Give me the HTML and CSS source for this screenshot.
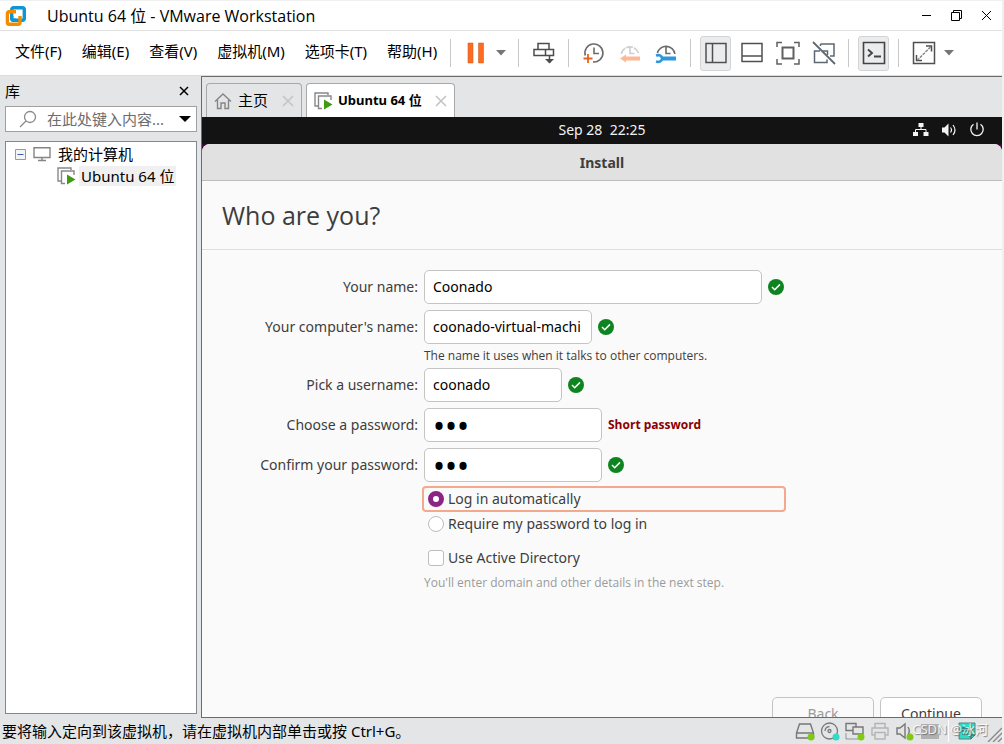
FILE: index.html
```html
<!DOCTYPE html>
<html lang="zh-CN">
    <head>
        <meta charset="utf-8">
        <title>Ubuntu 64 位 - VMware Workstation</title>
        <link rel="stylesheet" href="styles.css">
    </head>
    <body>
        <div class="app">
            <header class="titlebar">
                <svg class="logo" width="22" height="22" viewBox="0 0 22 22" fill="none" stroke-width="3.4">
                    <rect x="6.7" y="2.7" width="12.6" height="12.6" rx="2" stroke="#0e95d4"/>
                    <path d="M11 6.7H4.2a1.8 1.8 0 0 0-1.8 1.8v9a1.8 1.8 0 0 0 1.8 1.8h9a1.8 1.8 0 0 0 1.8-1.8V11" stroke="#f38b00"/>
                    <path d="M6.7 11v2.6a1.7 1.7 0 0 0 1.7 1.7H11" stroke="#0e95d4"/>
                </svg>
                <h1>Ubuntu 64 位 - VMware Workstation</h1>
                <div class="window-buttons">
                    <button aria-label="最小化"><svg width="11" height="11" viewBox="0 0 11 11"><path d="M1 5.5h9" stroke="#000"/></svg></button>
                    <button aria-label="还原"><svg width="11" height="11" viewBox="0 0 11 11" fill="none" stroke="#000"><path d="M.5 2.5h8v8h-8zM2.5 2.5v-2h8v8h-2"/></svg></button>
                    <button aria-label="关闭"><svg width="11" height="11" viewBox="0 0 11 11"><path d="M1 1l9 9M10 1l-9 9" stroke="#000"/></svg></button>
                </div>
            </header>

            <div class="toolbar">
                <nav class="menu">
                    <a href="#">文件(F)</a>
                    <a href="#">编辑(E)</a>
                    <a href="#">查看(V)</a>
                    <a href="#">虚拟机(M)</a>
                    <a href="#">选项卡(T)</a>
                    <a href="#">帮助(H)</a>
                </nav>
                <span class="sep"></span>
                <button class="tool" aria-label="挂起"><svg width="24" height="24" viewBox="0 0 24 24" fill="#ff6a1f" stroke="#c9683a" stroke-width=".6"><path d="M4 2h5v20H4zM14.500 2h5v20h-5z"/></svg></button>
                <button class="caret" aria-label="电源选项"><svg width="10" height="6" viewBox="0 0 10 6"><path d="M0 0h10L5 5.500z" fill="#767676"/></svg></button>
                <span class="sep"></span>
                <button class="tool" aria-label="发送按键"><svg width="24" height="24" viewBox="0 0 24 24" fill="none" stroke="#4c4c4c" stroke-width="1.500"><path d="M6 2.500h11v6H6zM2 8.500h19.500v6H2zM13.500 8.500v6M17.500 15v7"/><path d="M13 18h9l-4.500 4.500z" fill="#4c4c4c" stroke="none"/></svg></button>
                <span class="sep"></span>
                <button class="tool" aria-label="拍摄快照"><svg width="24" height="24" viewBox="0 0 24 24" fill="none" stroke="#6b6b6b" stroke-width="1.600"><path d="M3.300 14.500a9 9 0 1 1 7.700 6.400M12 6.500v6h5"/><path d="M6 13v9M1.500 17.500h9" stroke="#e8641f" stroke-width="1.800"/></svg></button>
                <button class="tool" aria-label="恢复快照"><svg width="24" height="24" viewBox="0 0 24 24" fill="none" stroke="#cfcfcf" stroke-width="1.600"><path d="M3.200 13a9 9 0 0 1 17.600 0" stroke-dasharray="7 1"/><path d="M12 6v6.500h4.500"/><path d="M8 17.500h14" stroke="#ffb796" stroke-width="4"/><path d="M2 17.500l6-4v8z" fill="#ffb796" stroke="none"/></svg></button>
                <button class="tool" aria-label="管理快照"><svg width="24" height="24" viewBox="0 0 24 24" fill="none" stroke="#6b6b6b" stroke-width="1.600"><path d="M3.300 12a9 9 0 0 1 17.600 1M12 6v6.500h4.500"/><path d="M8 17.500h14" stroke="#2c97dc" stroke-width="4"/><path d="M2 14.500c3.500-1 6 .5 6 3s-2.500 4-6 3" stroke="#2c97dc" stroke-width="2.600"/></svg></button>
                <span class="sep"></span>
                <button class="tool pressed" aria-label="库"><svg width="24" height="24" viewBox="0 0 24 24" fill="none" stroke="#505050" stroke-width="1.500"><path d="M2 2.500h20v19H2zM8.500 2.500v19"/></svg></button>
                <button class="tool" aria-label="缩略图栏"><svg width="24" height="24" viewBox="0 0 24 24" fill="none" stroke="#505050" stroke-width="1.500"><path d="M2 2.500h20v18H2zM2 15h20"/></svg></button>
                <button class="tool" aria-label="全屏"><svg width="24" height="24" viewBox="0 0 24 24" fill="none" stroke="#606060" stroke-width="1.500"><path d="M1 6V1.500h5M18 1.500h5V6M23 18v5h-5M6 23H1v-5"/><path d="M6.500 6.500h11v11h-11z" stroke-width="2"/></svg></button>
                <button class="tool" aria-label="Unity"><svg width="24" height="24" viewBox="0 0 24 24" fill="none" stroke="#5c6873" stroke-width="1.500"><path d="M8.500 3h13.500v12h-4M8.500 3v2M8 10H2.500v11.500H15v-3M11 10h4.500v4"/><path d="M1 1l22 22" stroke-width="1.800"/></svg></button>
                <span class="sep"></span>
                <button class="tool pressed" aria-label="控制台"><svg width="24" height="24" viewBox="0 0 24 24" fill="none" stroke="#444" stroke-width="1.600"><path d="M1.500 1.500h21v21h-21z"/><path d="M6 8.500l4 3.500-4 3.500M12 15.500h7" stroke-width="1.900"/></svg></button>
                <span class="sep"></span>
                <button class="tool" aria-label="拉伸客户机"><svg width="24" height="24" viewBox="0 0 24 24" fill="none" stroke="#505050" stroke-width="1.500"><path d="M1.500 1.500h21v21h-21zM14 5h5.500v5.500M10 19.500H4.500V14"/><path d="M18.500 6l-13 13" stroke="#888" stroke-dasharray="3 1"/></svg></button>
                <button class="caret" aria-label="拉伸选项"><svg width="10" height="6" viewBox="0 0 10 6"><path d="M0 0h10L5 5.500z" fill="#767676"/></svg></button>
            </div>

            <div class="main">
                <aside class="library">
                    <div class="library-head">
                        <h2>库</h2>
                        <button aria-label="关闭库"><svg width="10" height="10" viewBox="0 0 10 10"><path d="M1 1l8 8M9 1l-8 8" stroke="#000" stroke-width="1.500"/></svg></button>
                    </div>
                    <div class="search">
                        <svg width="18" height="18" viewBox="0 0 18 18" fill="none" stroke="#888" stroke-width="1.300"><circle cx="11" cy="7" r="5.500"/><path d="M7 11l-6 6"/></svg>
                        <input type="text" aria-label="搜索" placeholder="在此处键入内容...">
                        <button aria-label="搜索选项"><svg width="12" height="6" viewBox="0 0 12 6"><path d="M0 0h12L6 6z"/></svg></button>
                    </div>
                    <ul class="tree">
                        <li>
                            <svg width="11" height="11" viewBox="0 0 11 11"><path d="M.5.500h10v10H.5z" fill="#f4f4f4" stroke="#999"/><path d="M2.500 5.500h6" stroke="#3b5fb0"/></svg>
                            <svg width="18" height="16" viewBox="0 0 18 16" fill="none" stroke="#858585" stroke-width="1.400"><path d="M1 1.700h16v9.800H1zM9 11.500V14M5 14.500h8"/></svg>
                            <span>我的计算机</span>
                        </li>
                        <li class="child">
                            <svg width="19" height="18" viewBox="0 0 19 18" fill="none" stroke="#888" stroke-width="1.400"><path d="M4 14H1V1h13v2"/><path d="M8 16.500H4.500V4H17v4"/><path d="M10 7.500v10l8.500-5z" fill="#3f9c12" stroke="none"/></svg>
                            <span class="selected">Ubuntu 64 位</span>
                        </li>
                    </ul>
                </aside>

                <section class="console">
                    <div class="tabs">
                        <div class="tab">
                            <svg width="18" height="18" viewBox="0 0 18 18" fill="none" stroke="#858585" stroke-width="1.400"><path d="M1 9.500L9 2l8 7.500M3.500 8v8.500H7V11h4v5.500h3.500V8"/></svg>
                            <a href="#">主页</a>
                            <button aria-label="关闭主页"><svg width="12" height="12" viewBox="0 0 12 12"><path d="M1 1l10 10M11 1L1 11" stroke="#c4c4c4" stroke-width="1.600"/></svg></button>
                        </div>
                        <div class="tab active">
                            <svg width="19" height="18" viewBox="0 0 19 18" fill="none" stroke="#888" stroke-width="1.400"><path d="M4 14H1V1h13v2"/><path d="M8 16.500H4.500V4H17v4"/><path d="M10 7.500v10l8.500-5z" fill="#3f9c12" stroke="none"/></svg>
                            <a href="#">Ubuntu 64 位</a>
                            <button aria-label="关闭选项卡"><svg width="12" height="12" viewBox="0 0 12 12"><path d="M1 1l10 10M11 1L1 11" stroke="#c4c4c4" stroke-width="1.600"/></svg></button>
                        </div>
                    </div>

                    <div class="guest">
                        <div class="topbar">
                            <span class="clock">Sep 28&nbsp; 22:25</span>
                            <div class="indicators">
                                <svg width="16" height="16" viewBox="0 0 16 16" fill="#f4f4f4"><path d="M5.500 1h5v4h-5zM0 10h5v4H0zM10.500 10h5v4h-5z"/><path d="M8 5v2.500M2.500 10V7.500h10.500V10" fill="none" stroke="#f4f4f4"/></svg>
                                <svg width="16" height="16" viewBox="0 0 16 16" fill="none" stroke="#f4f4f4" stroke-width="1.200"><path d="M1 5.500h2.500l4-4v13l-4-4H1z" fill="#f4f4f4" stroke="none"/><path d="M9.500 5.500q2 2.500 0 5M12 3q4 5 0 10"/></svg>
                                <svg width="16" height="16" viewBox="0 0 16 16" fill="none" stroke="#f4f4f4" stroke-width="1.300"><path d="M4.500 2.300a6.200 6.200 0 1 0 7 0M8 .5v7"/></svg>
                            </div>
                        </div>
                        <div class="installer">
                            <div class="installer-title">Install</div>
                            <h2>Who are you?</h2>
                            <form class="form">
                                <label class="label" for="name">Your name:</label>
                                <div class="field">
                                    <input class="entry wide" id="name" type="text" value="Coonado">
                                    <svg class="ok" viewBox="0 0 16 16"><circle cx="8" cy="8" r="8"/><path d="M4 8l2.700 2.700L12 5.400"/></svg>
                                </div>

                                <label class="label" for="host">Your computer's name:</label>
                                <div class="field">
                                    <input class="entry host" id="host" type="text" value="coonado-virtual-machi">
                                    <svg class="ok" viewBox="0 0 16 16"><circle cx="8" cy="8" r="8"/><path d="M4 8l2.700 2.700L12 5.400"/></svg>
                                </div>
                                <p class="hint">The name it uses when it talks to other computers.</p>

                                <label class="label" for="user">Pick a username:</label>
                                <div class="field">
                                    <input class="entry user" id="user" type="text" value="coonado">
                                    <svg class="ok" viewBox="0 0 16 16"><circle cx="8" cy="8" r="8"/><path d="M4 8l2.700 2.700L12 5.400"/></svg>
                                </div>

                                <label class="label" for="password">Choose a password:</label>
                                <div class="field">
                                    <input class="entry password" id="password" type="password" value="123">
                                    <strong class="warning">Short password</strong>
                                </div>

                                <label class="label" for="confirm">Confirm your password:</label>
                                <div class="field">
                                    <input class="entry password" id="confirm" type="password" value="123">
                                    <svg class="ok" viewBox="0 0 16 16"><circle cx="8" cy="8" r="8"/><path d="M4 8l2.700 2.700L12 5.400"/></svg>
                                </div>

                                <div class="options">
                                    <label class="option focused"><input type="radio" name="login" checked>Log in automatically</label>
                                    <label class="option"><input type="radio" name="login">Require my password to log in</label>
                                    <label class="option directory"><input type="checkbox">Use Active Directory</label>
                                </div>
                                <p class="hint muted">You'll enter domain and other details in the next step.</p>
                            </form>
                            <div class="actions">
                                <button disabled>Back</button>
                                <button>Continue</button>
                            </div>
                        </div>
                    </div>
                </section>
            </div>

            <footer class="statusbar">
                <span>要将输入定向到该虚拟机，请在虚拟机内部单击或按 Ctrl+G。</span>
                <div class="devices">
                    <svg width="20" height="20" viewBox="0 0 20 20" fill="none" stroke="#777" stroke-width="1.400"><path d="M4.500 3h11l3 9v5H1.500v-5zM1.500 12h17"/><circle cx="16" cy="16" r="3.500" fill="#7fca14" stroke="none"/></svg>
                    <svg width="20" height="20" viewBox="0 0 20 20" fill="none" stroke="#777" stroke-width="1.300"><circle cx="9.500" cy="10" r="8"/><circle cx="9.500" cy="10" r="1.500"/><path d="M5 10a4.500 4.500 0 0 1 4.500-4.500"/><circle cx="16" cy="16" r="3.500" fill="#2fdcc8" stroke="none"/></svg>
                    <svg width="20" height="20" viewBox="0 0 20 20" fill="none" stroke="#777" stroke-width="1.400"><path d="M1 2.500h10v7H1z"/><path d="M8 6h10v7H8z" fill="#e4e5e7"/><path d="M1 12.500v5.500h12" stroke-dasharray="1 1"/><circle cx="16" cy="16" r="3.500" fill="#7fca14" stroke="none"/></svg>
                    <svg width="20" height="20" viewBox="0 0 20 20" fill="none" stroke="#b4b4b4" stroke-width="1.400"><path d="M5 7V2.500h10V7M5 14H2V7h16v7h-3M5 11.500h10V18H5z"/></svg>
                    <svg width="20" height="20" viewBox="0 0 20 20" fill="none" stroke="#777" stroke-width="1.400"><path d="M2 7h3l5-4v14l-5-4H2zM13 6q2.500 4 0 8"/><circle cx="15" cy="16" r="3.500" fill="#7fca14" stroke="none"/></svg>
                    <svg width="20" height="20" viewBox="0 0 20 20"><path d="M1 3h18v15H1z" fill="#b1b1b1"/></svg>
                    <span class="divider"></span>
                    <svg width="20" height="20" viewBox="0 0 20 20"><path d="M2 2h16v12l-4 4H2z" fill="#2fdcc8" stroke="#55857f"/><path d="M5 7h10M5 10h10M5 13h6M14 18v-4h4" fill="none" stroke="#39766f" stroke-width="1.300"/></svg>
                    <svg class="grip" width="15" height="15" viewBox="0 0 15 15"><path d="M1 15L15 1M6 15l9-9M11 15l4-4" stroke="#888" stroke-width="1.400"/></svg>
                </div>
                <span class="watermark">CSDN @冰河</span>
            </footer>
        </div>
    </body>
</html>
```
FILE: styles.css
```css
*{
    box-sizing: border-box;
}
body{
    margin: 0;
    font-family: "Noto Sans", "Noto Sans CJK SC", sans-serif;
    font-size: 15px;
    line-height: 20px;
    color: #000;
    background-color: #f0f0f0;
}
h1, h2, p, ul{
    margin: 0;
    padding: 0;
    font-weight: 400;
}
a{
    color: inherit;
    text-decoration: none;
}
button{
    display: flex;
    align-items: center;
    justify-content: center;
    padding: 0;
    border: 0;
    background: none;
    font: inherit;
}
input{
    font: inherit;
}
svg{
    flex: none;
}
.app{
    display: flex;
    flex-direction: column;
    height: 100vh;
    padding: 1px 2px 0 0;
    overflow: hidden;
}

/* title bar */
.titlebar{
    display: flex;
    align-items: center;
    height: 30px;
    padding: 0 10px 0 5px;
    background-color: #fff;
    border-bottom: 1px solid #e0e0e0;
}
.titlebar h1{
    flex: 1;
    margin-left: 20px;
    font-family: "Open Sans", "Noto Sans CJK SC", sans-serif;
    font-size: 16px;
}
.window-buttons{
    display: flex;
    gap: 19px;
}

/* menu and toolbar */
.toolbar{
    display: flex;
    align-items: center;
    gap: 5px;
    height: 45px;
    background-color: #fff;
    border-bottom: 1px solid #dcdcdc;
}
.menu{
    display: flex;
    gap: 20px;
    min-width: 441px;
    padding: 0 0 4px 15px;
    white-space: nowrap;
}
.sep{
    width: 1px;
    height: 28px;
    margin: 0 4px;
    background-color: #c8c8c8;
}
.tool{
    width: 31px;
    height: 35px;
    border-radius: 3px;
}
.pressed{
    background-color: #ebecee;
    border: 1px solid #d4d4d4;
}
.caret{
    justify-content: flex-start;
    width: 13px;
    height: 35px;
}

/* library */
.main{
    display: flex;
    flex: 1;
    min-height: 0;
    background-color: #e4e5e7;
}
.library{
    display: flex;
    flex-direction: column;
    width: 201px;
    padding: 0 4px 4px 5px;
}
.library-head{
    display: flex;
    align-items: center;
    justify-content: space-between;
    height: 30px;
    padding-right: 8px;
}
.library-head h2{
    font-size: 15px;
}
.search{
    display: flex;
    align-items: center;
    height: 26px;
    margin-bottom: 9px;
    padding: 0 5px 0 13px;
    background-color: #fff;
    border: 1px solid #a0a0a0;
}
.search input{
    flex: 1;
    min-width: 0;
    height: 24px;
    padding: 0 0 0 10px;
    border: 0;
    background: none;
}
.search input::placeholder{
    color: #6d6d6d;
}
.tree{
    flex: 1;
    padding: 1px 8px;
    list-style: none;
    background-color: #fff;
    border: 1px solid #828790;
}
.tree li{
    display: flex;
    align-items: center;
    gap: 7px;
    height: 22px;
    padding-left: 1px;
}
.tree .child{
    gap: 3px;
    padding-left: 43px;
}
.selected{
    padding: 0 2px;
    background-color: #f0f0f0;
    white-space: nowrap;
}

/* console and tabs */
.console{
    display: flex;
    flex: 1;
    flex-direction: column;
    min-width: 0;
    border: solid #6b6b6b;
    border-width: 1px 0 1px 1px;
}
.tabs{
    display: flex;
    align-items: flex-end;
    gap: 4px;
    height: 40px;
    padding-left: 4px;
}
.tab{
    display: flex;
    align-items: center;
    gap: 6px;
    height: 34px;
    padding: 0 7px;
    border: 1px solid #a9a9a9;
    border-bottom: 0;
    border-radius: 4px 4px 0 0;
}
.tab a{
    padding-bottom: 2px;
}
.tab button{
    margin-left: 8px;
}
.active{
    gap: 5px;
    background-color: #fff;
    font-size: 13px;
    font-weight: 700;
}

/* guest screen */
.guest{
    display: flex;
    flex: 1;
    flex-direction: column;
    min-height: 0;
    overflow: hidden;
    background-color: #3a0a30;
    color: #3d3d3d;
    font-size: 14px;
}
.topbar{
    display: grid;
    grid-template-columns: 1fr auto 1fr;
    align-items: center;
    flex: none;
    height: 27px;
    padding: 0 17px 1px;
    background-color: #131313;
    color: #f2f2f2;
}
.clock{
    grid-column: 2;
}
.indicators{
    display: flex;
    justify-content: flex-end;
    gap: 12px;
}
.installer{
    display: flex;
    flex: none;
    flex-direction: column;
    /* taller than the guest display, so the buttons run off its lower edge */
    height: calc(100% + 7px);
    background-color: #fafafa;
    border-radius: 8px 8px 0 0;
}
.installer-title{
    height: 37px;
    line-height: 37px;
    background-color: #e1e1e1;
    border-bottom: 1px solid #bdbdbd;
    border-radius: 8px 8px 0 0;
    font-weight: 700;
    text-align: center;
}
.installer h2{
    height: 69px;
    padding-left: 20px;
    border-bottom: 1px solid #dedede;
    font-family: "Open Sans", sans-serif;
    font-size: 25px;
    line-height: 68px;
}
.form{
    display: grid;
    grid-template-columns: 27% 1fr;
    gap: 6px;
    padding-top: 20px;
}
.label{
    line-height: 34px;
    text-align: right;
}
.field{
    display: flex;
    align-items: center;
    gap: 6px;
}
.entry{
    height: 34px;
    padding: 0 8px 2px;
    background-color: #fff;
    border: 1px solid #c4c4c4;
    border-radius: 5px;
    color: #000;
}
.wide{
    width: 338px;
}
.host{
    width: 168px;
}
.user{
    width: 138px;
}
.password{
    width: 178px;
    padding-bottom: 0;
    font-size: 32px;
}
.ok{
    width: 16px;
    height: 16px;
    fill: #0e8420;
}
.ok path{
    fill: none;
    stroke: #fff;
    stroke-width: 1.5;
}
.warning{
    color: #8b0000;
    font-family: "Open Sans", sans-serif;
    font-size: 12px;
}
.hint{
    grid-column: 2;
    font-family: "Open Sans", sans-serif;
    font-size: 12px;
    line-height: 12px;
}
.muted{
    margin-top: 2px;
    color: #9a9a9a;
}
.options{
    display: grid;
    grid-column: 2;
    gap: 3px;
    width: 360px;
}
.option{
    display: flex;
    align-items: center;
    gap: 4px;
    height: 22px;
    padding-left: 4px;
}
.focused{
    border-radius: 2px;
    outline: 2px solid #f4a98c;
}
.directory{
    margin-top: 9px;
}
.option input{
    appearance: none;
    width: 16px;
    height: 16px;
    margin: 0;
    background-color: #fff;
    border: 1px solid #bdbdbd;
    border-radius: 3px;
}
.option input[type="radio"]{
    border-radius: 50%;
}
.option input:checked{
    border: 5px solid #8b2583;
}
.actions{
    display: flex;
    justify-content: flex-end;
    gap: 6px;
    margin-top: auto;
    padding: 0 20px 20px 0;
}
.actions button{
    width: 102px;
    height: 34px;
    background-color: #fff;
    border: 1px solid #c4c4c4;
    border-radius: 5px;
    color: #3d3d3d;
}
.actions button:disabled{
    background-color: #fafafa;
    color: #9a9a9a;
}

/* status bar */
.statusbar{
    position: relative;
    display: flex;
    align-items: center;
    justify-content: space-between;
    height: 26px;
    padding-left: 2px;
    background-color: #e4e5e7;
}
.devices{
    display: flex;
    align-items: center;
    gap: 5px;
}
.grip{
    align-self: flex-end;
    margin-left: 5px;
}
.divider{
    width: 1px;
    height: 22px;
    margin: 0 3px;
    background-color: #fff;
}
.watermark{
    position: absolute;
    right: 14px;
    bottom: 5px;
    color: #fff;
    font-size: 13px;
    opacity: .8;
    text-shadow: 1px 1px 1px #666;
}
```
